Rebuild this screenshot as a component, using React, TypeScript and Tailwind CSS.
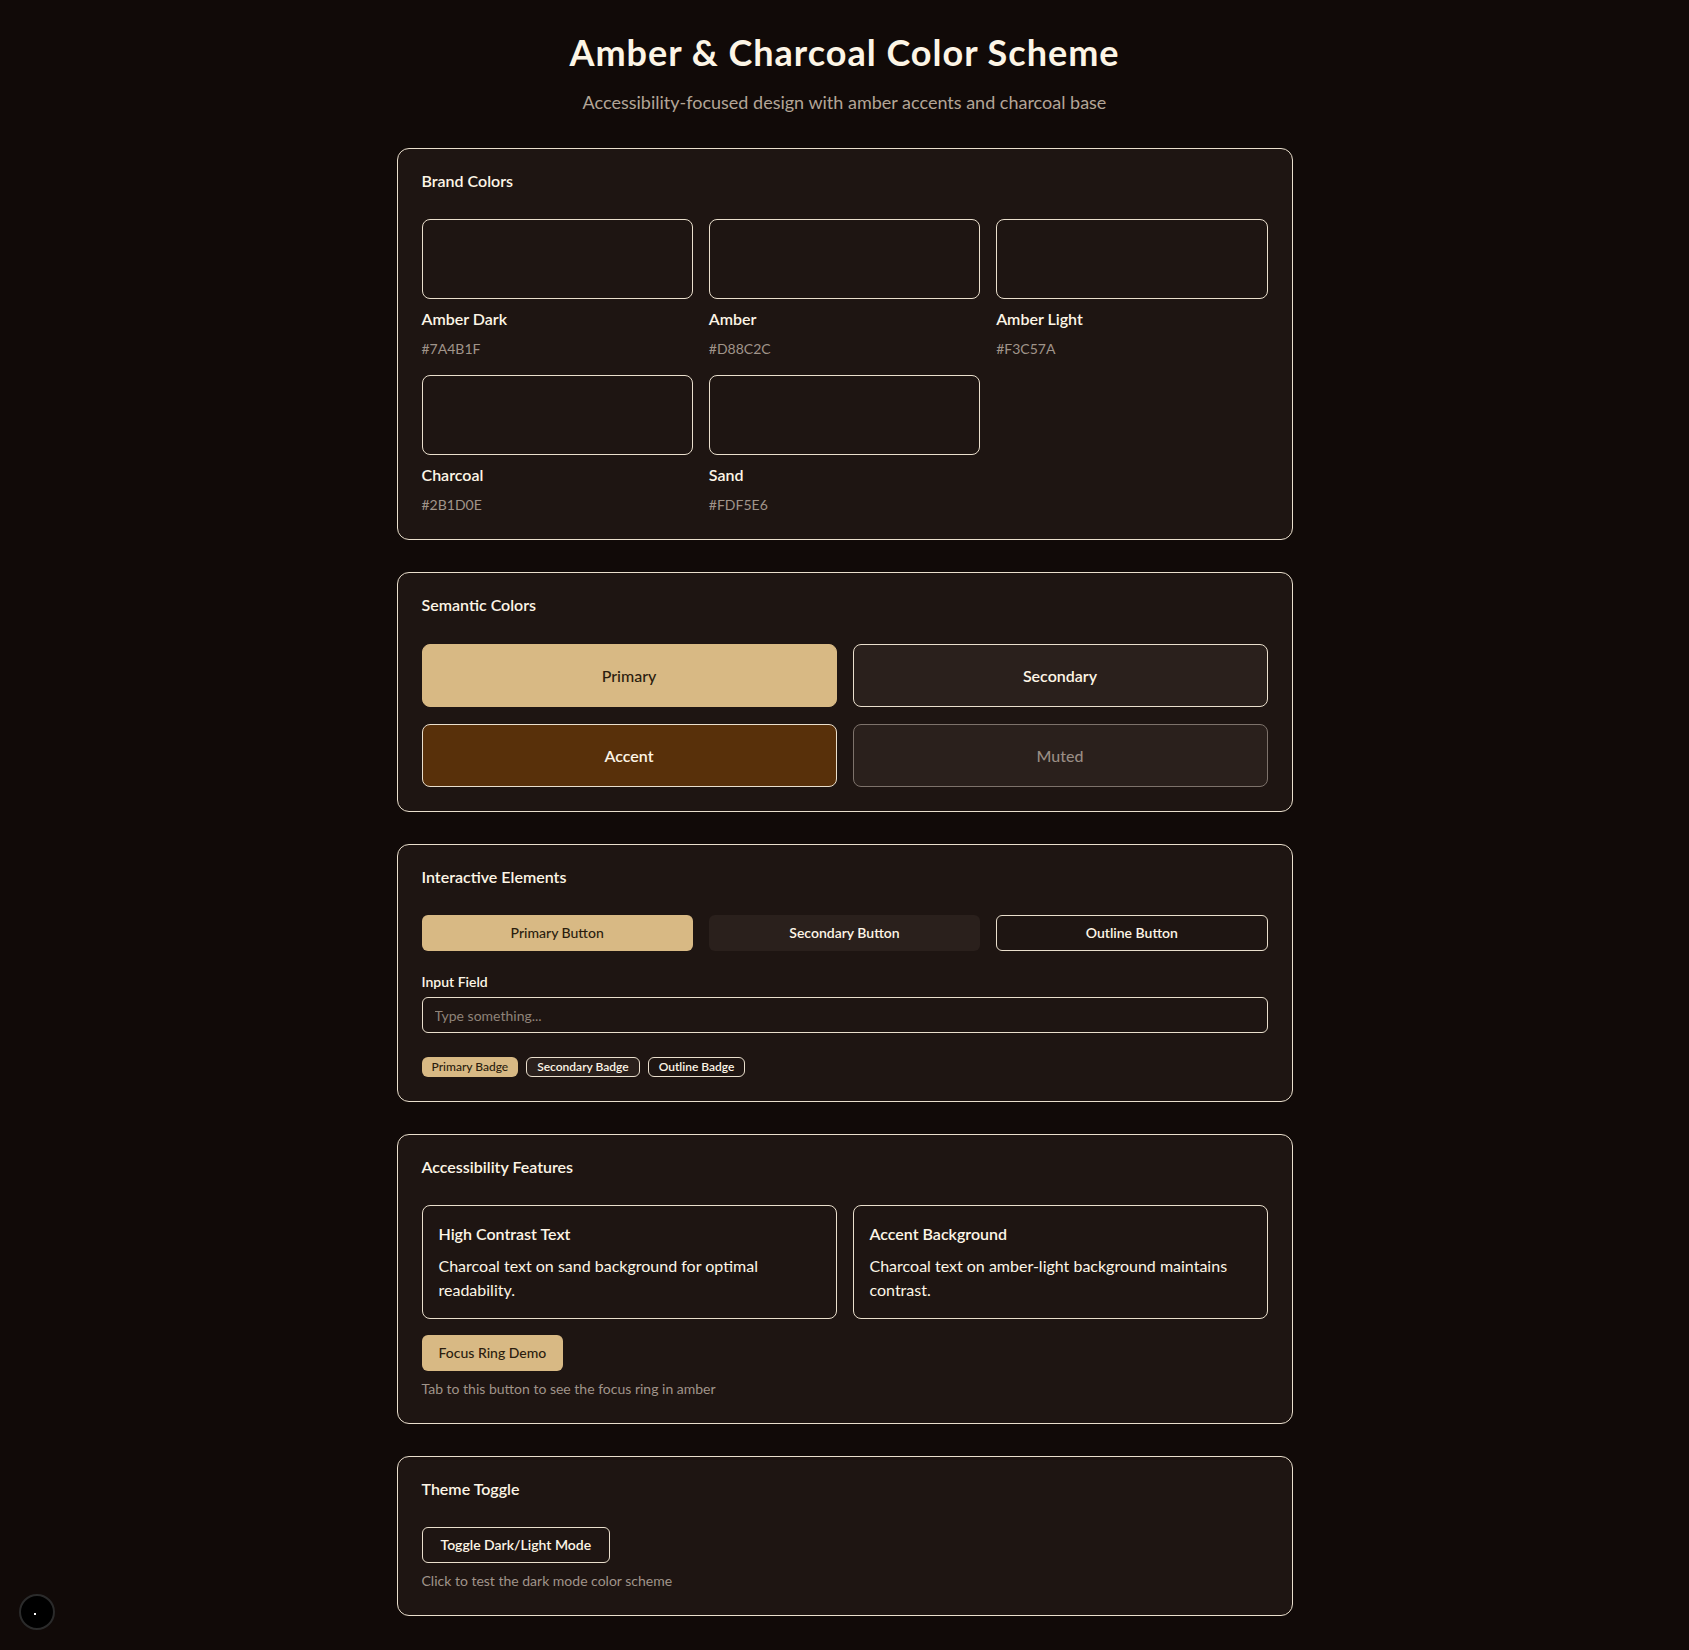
import { useState } from 'react';

const brandColors = [
  { name: 'Amber Dark', hex: '#7A4B1F' },
  { name: 'Amber', hex: '#D88C2C' },
  { name: 'Amber Light', hex: '#F3C57A' },
  { name: 'Charcoal', hex: '#2B1D0E' },
  { name: 'Sand', hex: '#FDF5E6' },
];

function Card({ title, children }: { title: string; children: React.ReactNode }) {
  return (
    <section className="rounded-xl border border-[#eadfcd] bg-[#1e1512]">
      <div className="px-6 pt-6 pb-[30px]">
        <h2 className="text-base leading-none font-semibold text-[#fdf5e6]">{title}</h2>
      </div>
      <div className="px-6 pb-6">{children}</div>
    </section>
  );
}

export default function App() {
  const [dark, setDark] = useState(true);
  const [value, setValue] = useState('');

  return (
    <div className="min-h-screen bg-[#110a08] font-['Lato','Noto_Sans',sans-serif] text-[#fdf5e6]">
      <div className="mx-auto max-w-4xl py-8">
        {/* Header */}
        <header className="mb-8 text-center">
          <h1 className="text-4xl font-bold tracking-[1px] text-[#fdf5e6]">Amber &amp; Charcoal Color Scheme</h1>
          <p className="mt-4 text-lg text-[#b3a597]">
            Accessibility-focused design with amber accents and charcoal base
          </p>
        </header>

        <div className="space-y-8">
          {/* Brand Colors */}
          <Card title="Brand Colors">
            <div className="grid grid-cols-3 gap-4">
              {brandColors.map((c) => (
                <div key={c.name}>
                  <div className="h-20 rounded-lg border border-[#eadfcd]" />
                  <div className="mt-2">
                    <p className="text-base leading-6 font-semibold text-[#fdf5e6]">{c.name}</p>
                    <p className="mt-2 text-sm text-[#a0948a]">{c.hex}</p>
                  </div>
                </div>
              ))}
            </div>
          </Card>

          {/* Semantic Colors */}
          <Card title="Semantic Colors">
            <div className="mt-px grid grid-cols-2 gap-x-4 gap-y-[17px]">
              <div className="flex h-[63px] items-center justify-center rounded-lg border border-[#d8b984] bg-[#d8b984] font-medium text-[#2b1d0e]">
                Primary
              </div>
              <div className="flex h-[63px] items-center justify-center rounded-lg border border-[#eadfcd] bg-[#2a201c] font-semibold text-[#fdf5e6]">
                Secondary
              </div>
              <div className="flex h-[63px] items-center justify-center rounded-lg border border-[#eadfcd] bg-[#58300a] font-semibold text-[#fdf5e6]">
                Accent
              </div>
              <div className="flex h-[63px] items-center justify-center rounded-lg border border-[#7d726b] bg-[#2a201c] font-medium text-[#998d84]">
                Muted
              </div>
            </div>
          </Card>

          {/* Interactive Elements */}
          <Card title="Interactive Elements">
            <div className="space-y-6">
              <div className="grid grid-cols-3 gap-4">
                <button className="h-9 rounded-md bg-[#d8b984] text-sm font-medium text-[#2b1d0e]">Primary Button</button>
                <button className="h-9 rounded-md bg-[#2a201c] text-sm font-semibold text-[#fdf5e6]">Secondary Button</button>
                <button className="h-9 rounded-md border border-[#eadfcd] text-sm font-semibold text-[#fdf5e6]">Outline Button</button>
              </div>
              <div>
                <label className="block text-sm leading-none font-semibold text-[#fdf5e6]">Input Field</label>
                <input
                  value={value}
                  onChange={(e) => setValue(e.target.value)}
                  placeholder="Type something..."
                  className="mt-2 h-9 w-full rounded-md border border-[#eadfcd] bg-transparent px-3 text-sm text-[#fdf5e6] placeholder-[#8f8379] outline-none"
                />
              </div>
              <div className="flex gap-2">
                <span className="flex h-5 items-center rounded-md bg-[#d8b984] px-2.5 text-xs font-medium text-[#2b1d0e]">Primary Badge</span>
                <span className="flex h-5 items-center rounded-md border border-[#eadfcd] bg-[#2a201c] px-2.5 text-xs font-semibold text-[#fdf5e6]">Secondary Badge</span>
                <span className="flex h-5 items-center rounded-md border border-[#eadfcd] px-2.5 text-xs font-semibold text-[#fdf5e6]">Outline Badge</span>
              </div>
            </div>
          </Card>

          {/* Accessibility Features */}
          <Card title="Accessibility Features">
            <div className="grid grid-cols-2 gap-4">
              <div className="rounded-lg border border-[#eadfcd] p-4">
                <h3 className="font-semibold text-[#fdf5e6]">High Contrast Text</h3>
                <p className="mt-2 text-[#fdf5e6]">Charcoal text on sand background for optimal readability.</p>
              </div>
              <div className="rounded-lg border border-[#eadfcd] p-4">
                <h3 className="font-semibold text-[#fdf5e6]">Accent Background</h3>
                <p className="mt-2 text-[#fdf5e6]">Charcoal text on amber-light background maintains contrast.</p>
              </div>
            </div>
            <button className="mt-4 h-9 rounded-md bg-[#d8b984] px-[17px] text-sm font-medium text-[#2b1d0e]">Focus Ring Demo</button>
            <p className="mt-2 text-sm text-[#a0948a]">Tab to this button to see the focus ring in amber</p>
          </Card>

          {/* Theme Toggle */}
          <Card title="Theme Toggle">
            <button
              onClick={() => setDark(!dark)}
              className="h-9 rounded-md border border-[#eadfcd] px-[18px] text-sm font-semibold text-[#fdf5e6]"
            >
              Toggle Dark/Light Mode
            </button>
            <p className="mt-2 text-sm text-[#a0948a]">Click to test the dark mode color scheme</p>
          </Card>
        </div>
      </div>

      {/* floating indicator */}
      <div className="fixed bottom-[20px] left-[19px] flex h-9 w-9 items-center justify-center rounded-full border-2 border-[#2b2b2b] bg-black">
        <span className="mt-1 mr-1 h-[2px] w-[2px] bg-white" />
      </div>
    </div>
  );
}
